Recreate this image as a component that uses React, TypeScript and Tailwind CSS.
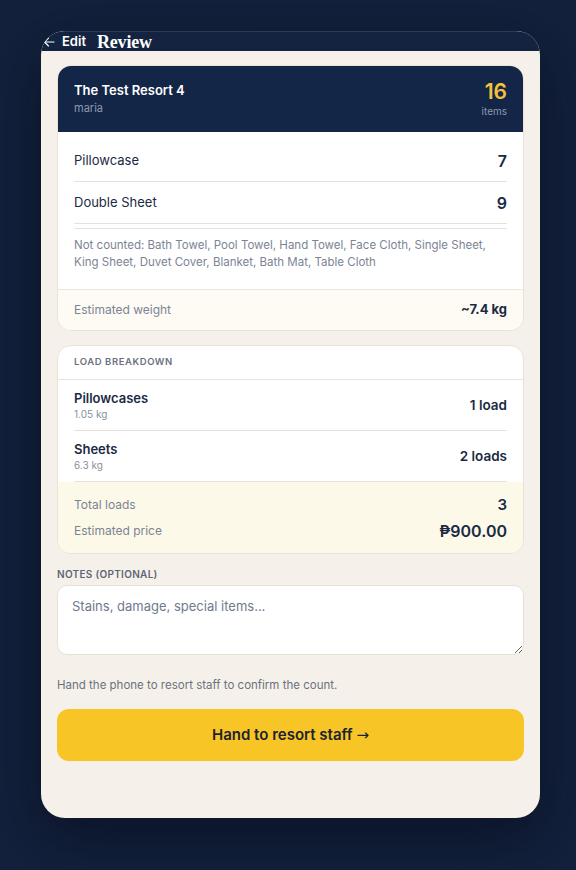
const rows = [
  { name: 'Pillowcase', qty: 7 },
  { name: 'Double Sheet', qty: 9 },
];

const loads = [
  { name: 'Pillowcases', weight: '1.05 kg', loads: '1 load' },
  { name: 'Sheets', weight: '6.3 kg', loads: '2 loads' },
];

const notCounted = [
  'Bath Towel',
  'Pool Towel',
  'Hand Towel',
  'Face Cloth',
  'Single Sheet',
  'King Sheet',
  'Duvet Cover',
  'Blanket',
  'Bath Mat',
  'Table Cloth',
];

export default function App() {
  return (
    <div
      className="min-h-screen w-full bg-[#13213c] pt-[31px] pl-[41px]"
      style={{ fontFamily: 'Inter, "Noto Sans", sans-serif' }}
    >
      <div className="w-[499px] h-[787px] rounded-[24px] overflow-hidden bg-[#f5f1ea] shadow-[0_20px_60px_rgba(5,10,25,0.6)] flex flex-col">
        {/* top bar */}
        <div className="h-[20px] bg-[#14233f] border-t border-l border-r border-white/10 rounded-t-[24px] flex items-center gap-[11px] pl-[1px] text-white">
          <span className="flex items-center gap-[7px] text-[13px] font-semibold">
            <svg width="12" height="12" viewBox="0 0 24 24" fill="none" stroke="currentColor" strokeWidth="2.3" strokeLinecap="round" strokeLinejoin="round">
              <path d="M22 12H3" />
              <path d="M11 20l-8-8 8-8" />
            </svg>
            Edit
          </span>
          <span
            className="text-[18px] font-bold leading-none tracking-[-0.01em]"
            style={{ fontFamily: '"Liberation Serif", "DejaVu Serif", serif' }}
          >
            Review
          </span>
        </div>

        <div className="flex-1 px-[16px] pt-[14px] flex flex-col">
          {/* count summary */}
          <div className="rounded-[14px] overflow-hidden bg-white border border-[#e9e3d7]">
            <div className="bg-[#142647] px-[16px] pt-[14px] pb-[14px] flex justify-between items-start">
              <div>
                <div className="text-[13px] font-semibold text-white leading-[20px]">The Test Resort 4</div>
                <div className="text-[11px] text-[#8d98ad] leading-[16px]">maria</div>
              </div>
              <div className="text-right">
                <div className="text-[21px] font-semibold text-[#f5c23c] leading-[24px]">16</div>
                <div className="text-[10px] text-[#8d98ad] leading-[14px]">items</div>
              </div>
            </div>
            <div className="px-[16px] pt-[8px]">
              {rows.map((r) => (
                <div key={r.name} className="h-[42px] flex items-center justify-between border-b border-[#e6e2da]">
                  <span className="text-[13px] text-[#1b2a44]">{r.name}</span>
                  <span className="text-[16px] font-semibold text-[#1b2a44]">{r.qty}</span>
                </div>
              ))}
              <p className="mt-[4px] border-t border-[#e6e2da] pt-[8px] pb-[18px] text-[11.5px] leading-[17px] text-[#7b8494]">
                {`Not counted: ${notCounted.join(', ')}`}
              </p>
            </div>
            <div className="border-t border-[#ebe6dc] bg-[#fdfbf4] h-[41px] px-[16px] flex items-center justify-between">
              <span className="text-[12px] text-[#7b8494]">Estimated weight</span>
              <span className="text-[13px] font-bold text-[#1b2a44]">~7.4 kg</span>
            </div>
          </div>

          {/* load breakdown */}
          <div className="mt-[14px] rounded-[14px] overflow-hidden bg-white border border-[#e9e3d7]">
            <div className="h-[34px] px-[16px] flex items-center border-b border-[#ebe6dc] text-[9.5px] font-semibold tracking-[0.06em] text-[#6b7280]">
              LOAD BREAKDOWN
            </div>
            <div className="px-[16px]">
              {loads.map((l) => (
                <div key={l.name} className="h-[51px] flex items-center justify-between border-b border-[#e6e2da]">
                  <div>
                    <div className="text-[13px] font-semibold text-[#1b2a44] leading-[17px]">{l.name}</div>
                    <div className="text-[10px] text-[#8a909c] leading-[14px]">{l.weight}</div>
                  </div>
                  <span className="text-[13.5px] font-semibold text-[#1b2a44]">{l.loads}</span>
                </div>
              ))}
            </div>
            <div className="bg-[#fdf9e8] px-[16px] pt-[14px] pb-[13px] flex flex-col gap-[8px]">
              <div className="flex items-center justify-between h-[18px]">
                <span className="text-[12px] text-[#7b8494]">Total loads</span>
                <span className="text-[15px] font-semibold text-[#1b2a44]">3</span>
              </div>
              <div className="flex items-center justify-between h-[18px]">
                <span className="text-[12px] text-[#7b8494]">Estimated price</span>
                <span className="text-[16px] font-semibold text-[#1b2a44]">₱900.00</span>
              </div>
            </div>
          </div>

          {/* notes */}
          <div className="mt-[13px] text-[10px] font-semibold tracking-[0.03em] text-[#5d6677] leading-[14px]">
            NOTES (OPTIONAL)
          </div>
          <textarea
            className="mt-[4px] h-[70px] w-full rounded-[10px] border border-[#e6e1d7] bg-white px-[14px] py-[11px] text-[13px] text-[#1b2a44] placeholder:text-[#6f7a8c] outline-none"
            placeholder="Stains, damage, special items..."
          />

          <p className="mt-[22px] text-[11.5px] text-[#6b7280] leading-[16px]">
            Hand the phone to resort staff to confirm the count.
          </p>

          <button className="mt-[16px] h-[52px] w-full rounded-[12px] bg-[#f8c526] text-[15px] font-semibold text-[#1c2230]">
            Hand to resort staff{' '}
            <span style={{ fontFamily: '"DejaVu Sans", sans-serif' }} className="font-normal">
              →
            </span>
          </button>
        </div>
      </div>
    </div>
  );
}
